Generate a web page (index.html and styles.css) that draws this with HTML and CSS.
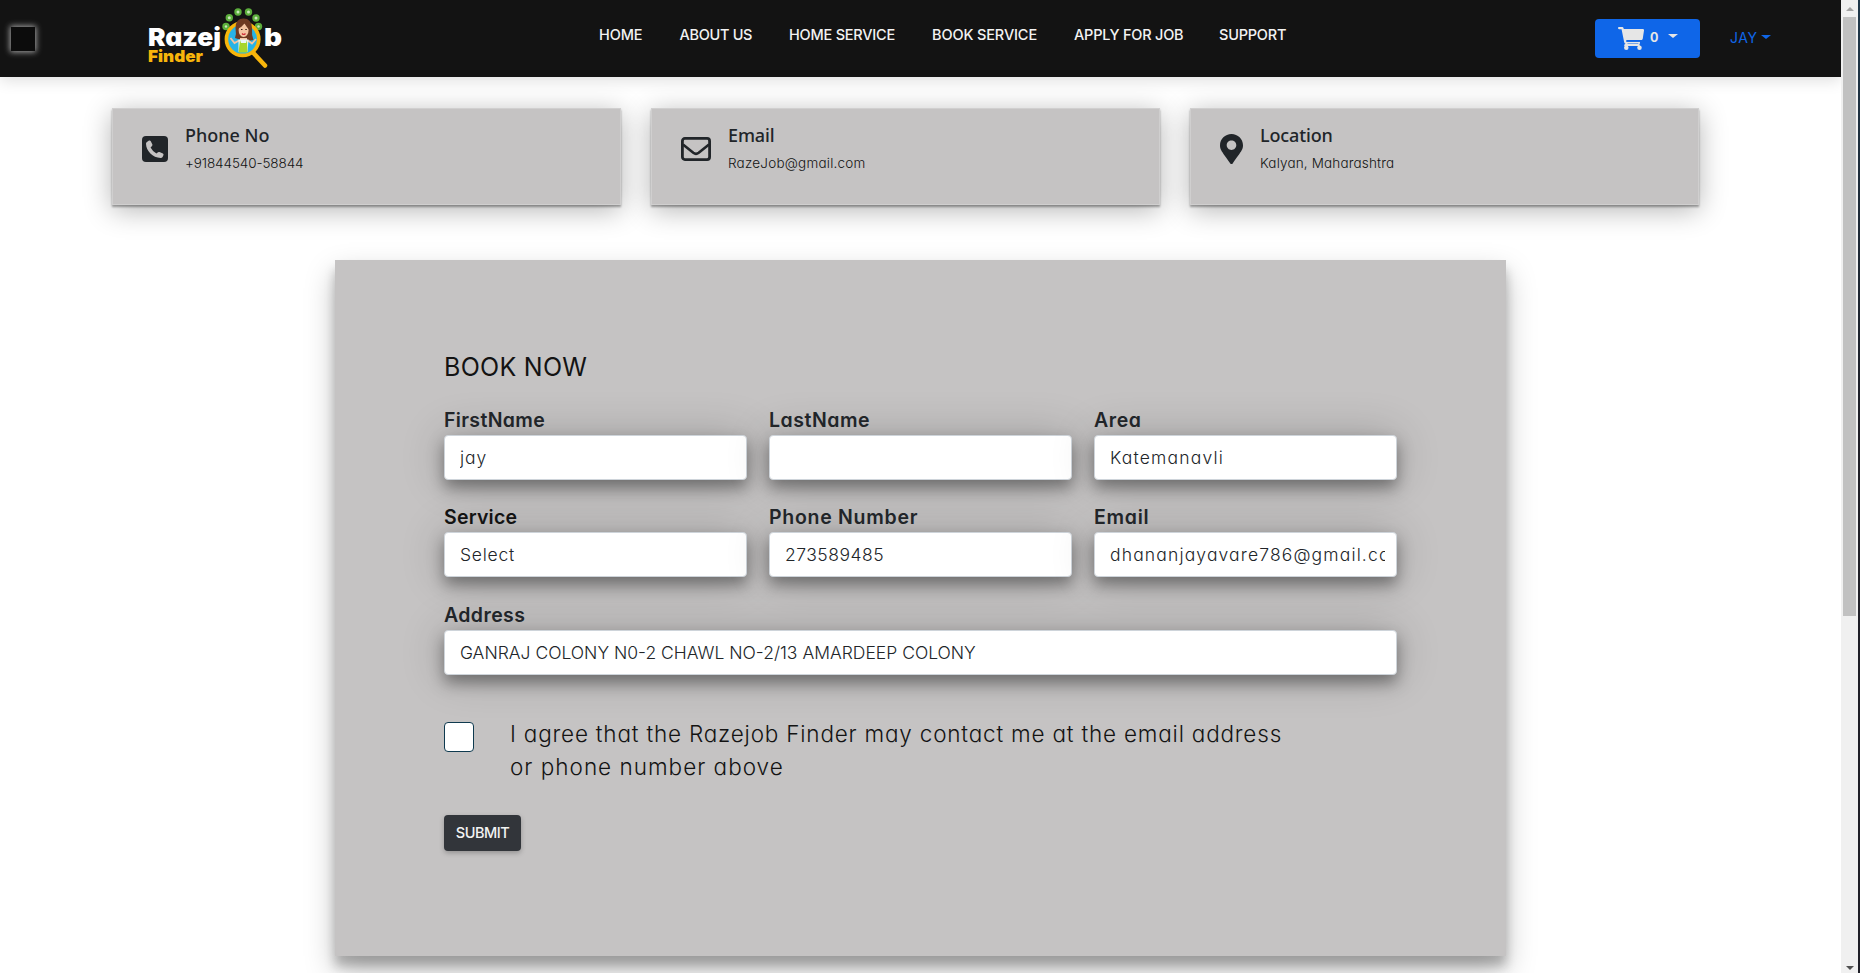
FILE: index.html
```html
<!DOCTYPE html>
<html lang="en">
<head>
<meta charset="utf-8">
<title>Razejob Finder - Book Service</title>
<link rel="stylesheet" href="styles.css">
</head>
<body>
<div class="page">
  <header class="header">
    <span class="toggle"></span>
    <svg class="logo" width="136" height="64" viewBox="0 0 136 64">
      <text class="logo-main" x="0" y="40" textLength="73" lengthAdjust="spacingAndGlyphs">Razej</text>
      <text class="logo-main" x="116" y="40" textLength="18" lengthAdjust="spacingAndGlyphs">b</text>
      <text class="logo-sub" x="0" y="56" textLength="55" lengthAdjust="spacingAndGlyphs">Finder</text>
      <g fill="#5cae3c"><circle cx="78" cy="20.500" r="3.700"/><circle cx="81.300" cy="11.700" r="3.700"/><circle cx="90" cy="6" r="3.700"/><circle cx="100.500" cy="6" r="3.700"/><circle cx="108" cy="12" r="3.700"/><circle cx="110.500" cy="20.500" r="3.700"/></g>
      <g fill="#c9e6ba"><circle cx="81.300" cy="11.700" r="1.500"/><circle cx="90" cy="6" r="1.500"/><circle cx="100.500" cy="6" r="1.500"/><circle cx="108" cy="12" r="1.500"/><circle cx="78" cy="20.500" r="1.200"/><circle cx="110.500" cy="20.500" r="1.200"/></g>
      <path d="M104.500 46 L117 59.500" stroke="#f8b50b" stroke-width="4.500" stroke-linecap="round"/>
      <circle cx="94.600" cy="33.200" r="16.200" fill="#27b3e6" stroke="#f8b50b" stroke-width="3.600"/>
      <path d="M87 32 Q88.500 28 87.500 22 Q87.500 12.500 95.500 12.500 Q103.500 12.500 104 22 Q103.500 29 105.500 34 Q96 36 87 32Z" fill="#6d3a22"/>
      <path d="M92 32 H99 V38 H92Z" fill="#f4c4a1"/>
      <ellipse cx="95.600" cy="24" rx="5" ry="7" fill="#f4c4a1"/>
      <path d="M89.500 23 Q90.500 14.500 97 15 Q101 16 101.500 24 Q98.500 21 96.500 17.500 Q94 21 89.500 23Z" fill="#6d3a22"/>
      <path d="M93 23.500h1.500M97.300 23.500h1.500" stroke="#3a2218" stroke-width="1.200"/>
      <path d="M94 27.500 Q95.700 29.500 97.500 27.500" stroke="#d22f3c" stroke-width="1.200" fill="none"/>
      <path d="M82.500 32 L86.500 37 L91 34.500 M100 34.500 L104 37.500 L108 33" stroke="#f4c4a1" stroke-width="1.800" fill="none"/>
      <path d="M90.500 33.500 H100.500 L99.500 46 H90.500Z" fill="#eaf6f8"/>
      <path d="M92 34 L93 37 H98 L99 34 L99.500 46.500 H90.500Z" fill="#a7d62c"/>
    </svg>
    <nav class="nav">
      <a class="n1">HOME</a><a class="n2">ABOUT US</a><a class="n3">HOME SERVICE</a><a class="n4">BOOK SERVICE</a><a class="n5">APPLY FOR JOB</a><a class="n6">SUPPORT</a>
    </nav>
    <button class="cart">
      <svg width="26" height="23" viewBox="0 0 576 512" preserveAspectRatio="none"><path fill="#e6e6e6" d="M24 0C10 0 0 10 0 24s10 24 24 24h55l58 292c4 20 20 32 40 32h310v-46H190l-8-36h330c18 0 32-12 36-28l28-182c4-20-8-38-30-38H128L122 20C118 6 108 0 96 0zM150 372l-14 50h350l-14-50z"/><circle cx="184" cy="462" r="50" fill="#e6e6e6"/><circle cx="476" cy="462" r="50" fill="#e6e6e6"/><path fill="#0f66e8" d="M185 318h300v16H185zM210 366h240v14H210z"/></svg>
      <span class="count">0</span><i class="caret"></i>
    </button>
    <a class="user">JAY<i class="caret"></i></a>
  </header>

  <section class="cards">
    <article class="card">
      <svg class="card-icon phone" width="26" height="26" viewBox="0 0 26 26"><rect width="26" height="26" rx="4" fill="#212529"/><path fill="#c5c3c3" d="M4.600 6.200 L7 4.600 Q8.200 4.200 8.800 5.200 L10.400 8.600 Q10.600 9.400 10 10 L8.600 11.600 Q10.700 15.800 14.400 17.500 L16 16.200 Q16.700 15.700 17.500 16 L20.900 17.400 Q21.800 18 21.500 19 L20.600 21 Q20 22 18.600 22 C10.800 21.800 4.100 15 4 7.800 Q4 6.700 4.600 6.200Z"/></svg>
      <div class="card-text"><h2 class="t1">Phone No</h2><p class="s1">+91844540-58844</p></div>
    </article>
    <article class="card">
      <svg class="card-icon mail" width="30" height="24" viewBox="0 0 30 24"><rect x="1.400" y="1.400" width="27.200" height="21.200" rx="2.500" fill="none" stroke="#212529" stroke-width="2.800"/><path d="M2 7.500 L12.300 15.800 Q15 17.800 17.700 15.800 L28 7.500" fill="none" stroke="#212529" stroke-width="2.600"/></svg>
      <div class="card-text"><h2 class="t2">Email</h2><p class="s2">RazeJob@gmail.com</p></div>
    </article>
    <article class="card">
      <svg class="card-icon pin" width="23" height="30" viewBox="0 0 384 512" preserveAspectRatio="none"><path fill="#212529" d="M172.300 501.700C27 291 0 269.400 0 192 0 86 86 0 192 0s192 86 192 192c0 77.400-27 99-172.300 309.700-9.500 13.800-29.900 13.800-39.400 0zM192 272c44.200 0 80-35.800 80-80s-35.800-80-80-80-80 35.800-80 80 35.800 80 80 80z"/></svg>
      <div class="card-text"><h2 class="t3">Location</h2><p class="s3">Kalyan, Maharashtra</p></div>
    </article>
  </section>

  <form class="booking">
    <h1><span>BOOK NOW</span></h1>
    <div class="fields">
      <div class="field"><label class="l1">FirstName</label><div class="input"><span class="v1">jay</span></div></div>
      <div class="field"><label class="l2">LastName</label><div class="input"></div></div>
      <div class="field"><label class="l3">Area</label><div class="input"><span class="v2">Katemanavli</span></div></div>
      <div class="field"><label class="l4">Service</label><div class="input"><span class="v3">Select</span></div></div>
      <div class="field"><label class="l5">Phone Number</label><div class="input"><span class="v4">273589485</span></div></div>
      <div class="field"><label class="l6">Email</label><div class="input"><span class="v5">dhananjayavare786@gmail.com</span></div></div>
      <div class="field wide"><label class="l7">Address</label><div class="input"><span class="v6">GANRAJ COLONY N0-2 CHAWL NO-2/13 AMARDEEP COLONY</span></div></div>
    </div>
    <div class="agree">
      <span class="checkbox"></span>
      <p><span class="a1">I agree that the Razejob Finder may contact me at the email address</span><br><span class="a2">or phone number above</span></p>
    </div>
    <button class="submit" type="button">SUBMIT</button>
  </form>
</div>
<aside class="scrollbar"><i class="arrow up"></i><div class="thumb"></div><i class="arrow down"></i></aside>
<div class="edge"></div>
</body>
</html>
```
FILE: styles.css
```css
* { box-sizing: border-box; margin: 0; padding: 0; }

body {
  display: flex;
  width: 1860px;
  height: 973px;
  overflow: hidden;
  background: #fff;
  color: #212529;
  font-family: Inter, "Open Sans", sans-serif;
  font-feature-settings: "cv11";
}

button { font: inherit; border: 0; }

.page { width: 1841px; height: 973px; overflow: hidden; }

.header {
  display: flex;
  align-items: flex-start;
  height: 77px;
  background: #131313;
  box-shadow: 0 4px 14px rgba(0, 0, 0, .12);
}
.toggle {
  width: 24px;
  height: 24px;
  margin: 27px 0 0 11px;
  background: #0c0c0c;
  box-shadow: 0 0 6px 1px #aaa;
}
.logo { margin: 6px 0 0 113px; overflow: visible; }
.logo-main { font-size: 25px; font-weight: 900; fill: #fff; }
.logo-sub { font-size: 16.500px; font-weight: 900; fill: #f8b50b; }

.nav {
  display: grid;
  grid-template-columns: 80.500px 109.500px 143px 142px 145px 67px;
  margin: 25px 0 0 315px;
  font-size: 14.500px;
  line-height: 20px;
  font-weight: 500;
  letter-spacing: -.22px;
  color: #f2f2f2;
  white-space: nowrap;
}
.n1, .n4 { letter-spacing: -.12px; }
.n2 { letter-spacing: -.3px; }
.cart {
  display: flex;
  width: 105px;
  height: 39px;
  margin: 19px 0 0 309px;
  padding: 8px 0 0 23px;
  border-radius: 4px;
  background: #0f66e8;
  color: #e6e6e6;
}
.caret {
  display: block;
  width: 0;
  height: 0;
  border: 4px solid transparent;
  border-width: 4px 5px 0;
  border-top-color: currentColor;
}
.count { margin-left: 6px; font-size: 12.500px; font-weight: 700; line-height: 22px; }
.cart .caret { margin: 7px 0 0 10px; }
.user {
  display: flex;
  gap: 3px;
  margin: 28px 0 0 30px;
  color: #0f66e8;
  font-size: 14px;
  line-height: 20px;
  letter-spacing: .6px;
}
.user .caret { margin-top: 7px; }

.cards {
  display: grid;
  grid-template-columns: repeat(3, 509px);
  gap: 30px;
  padding: 31px 0 0 112px;
}
.card {
  display: flex;
  height: 97px;
  padding: 0 0 0 29px;
  border: 1px solid #d0cfcf;
  background: #c5c3c3;
  box-shadow: 0 2px 2px rgba(0, 0, 0, .35), 0 5px 26px rgba(0, 0, 0, .3);
}
.card-text { padding-top: 14px; }
.phone { margin: 27px 17px 0 0; }
.mail { margin: 28px 17px 0 0; }
.pin { margin: 25px 17px 0 0; }
.card h2 { font: 500 18px/24px "Noto Sans", sans-serif; white-space: nowrap; }
.card .t2, .card .t3 { letter-spacing: -.14px; }
.card p { margin-top: 6px; font-size: 13.500px; line-height: 20px; font-weight: 350; color: #131313; white-space: nowrap; }
.s1 { letter-spacing: -.1px; }
.s2 { letter-spacing: .22px; }
.s3 { letter-spacing: .16px; }

.booking {
  width: 1171px;
  height: 696px;
  margin: 55px 0 0 335px;
  padding: 92px 109px 0;
  background: #c5c3c3;
  box-shadow: 0 14px 28px rgba(0, 0, 0, .25), 0 10px 10px rgba(0, 0, 0, .22);
}
.booking h1 { font-size: 25px; font-weight: 420; line-height: 30px; letter-spacing: .28px; color: #131313; }
.fields {
  display: grid;
  grid-template-columns: repeat(3, 303px);
  gap: 22px;
  margin-top: 23px;
}
.wide { grid-column: 1 / -1; padding-top: 1px; }
.field label { display: block; height: 30px; font-size: 19.500px; line-height: 30px; font-weight: 560; white-space: nowrap; }
.field .l4 { color: #131313; }
.l1 { letter-spacing: .35px; }
.l2 { letter-spacing: .52px; }
.l3 { letter-spacing: .6px; }
.l4 { letter-spacing: .22px; }
.l5 { letter-spacing: .72px; }
.l6 { letter-spacing: .7px; }
.l7 { letter-spacing: .4px; }
.input {
  height: 45px;
  padding: 0 11px 0 15px;
  border: 1px solid #ced4da;
  border-radius: 4px;
  background: #fff;
  box-shadow: 0 0 45px rgba(0, 0, 0, .2), 0 8px 16px rgba(0, 0, 0, .38);
  font-size: 17.500px;
  line-height: 44px;
  font-weight: 340;
}
.input span { display: block; overflow: hidden; white-space: nowrap; height: 43px; }
.v1 { letter-spacing: .9px; }
.v2 { letter-spacing: 1.180px; }
.v3 { letter-spacing: .75px; }
.v4 { letter-spacing: .5px; }
.v5 { letter-spacing: 1.150px; }
.v6 { letter-spacing: 0; }
.agree { display: flex; margin-top: 43px; }
.checkbox {
  width: 30px;
  height: 30px;
  margin: 4px 36px 0 0;
  border: 1px solid #0f3a4f;
  border-radius: 4px;
  background: #fff;
}
.agree p { height: 66px; margin-top: -1px; font-size: 22.500px; line-height: 33px; font-weight: 330; color: #131313; white-space: nowrap; }
.a1 { letter-spacing: .8px; }
.a2 { letter-spacing: 1px; }
.submit {
  width: 77px;
  height: 36px;
  margin-top: 32px;
  padding-bottom: 1px;
  border-radius: 4px;
  background: #32353a;
  box-shadow: 0 2px 5px rgba(0, 0, 0, .25);
  color: #f2f2f2;
  font-size: 14.500px;
  font-weight: 500;
  letter-spacing: -.5px;
}

.scrollbar { display: flex; flex-direction: column; align-items: center; width: 17px; height: 973px; background: #f0f0f0; }
.arrow { width: 0; height: 0; border: 4px solid transparent; }
.up { margin: 7px 0 6px; border-top: 0; border-bottom-color: #a3a3a3; }
.down { margin: auto 0 3px; border-bottom: 0; border-top-color: #505050; }
.thumb { width: 13px; height: 599px; background: #c1c1c1; }
.edge { width: 2px; height: 973px; background: linear-gradient(#20384a, #1f1f27 45%); }
```
